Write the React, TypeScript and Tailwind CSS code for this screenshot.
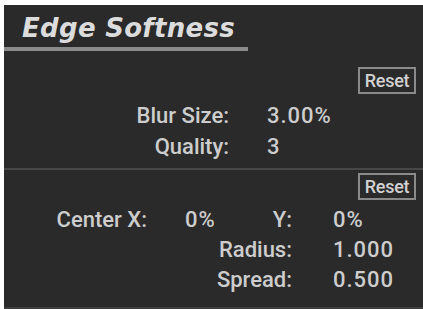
import React from "react";

const LABEL = "font-['Roboto',sans-serif] font-medium text-[22px] leading-[30px] text-[#cdcdcd]";

const ResetButton = () => (
  <div className="flex justify-end pr-[7px]">
    <button className="h-[27px] w-[58px] border-2 border-[#8a8a8a] text-[18px] leading-none tracking-[-0.3px] text-[#d2d2d2] font-['Roboto',sans-serif] font-medium">
      Reset
    </button>
  </div>
);

const App = () => {
  return (
    <div className="h-[309px] w-[423px] bg-white pl-[4px] pt-[5px]">
      <div className="flex h-full flex-col bg-[#2a2a2a]">
        {/* Title */}
        <div className="pt-[8px] pl-[18px]">
          <h1 className="font-['DejaVu_Sans',sans-serif] text-[26px] font-bold italic leading-[30px] tracking-[0.3px] text-[#dcdcdc]">
            Edge Softness
          </h1>
        </div>
        <div className="mt-[4px] h-[4px] w-[244px] bg-[#8a8a8a]" />

        {/* Blur */}
        <div className="mt-[16px]">
          <ResetButton />
        </div>
        <div className="mt-[6px] grid grid-cols-[225px_1fr] gap-x-[38px]">
          <span className={`${LABEL} text-right leading-[31px]`}>Blur Size:</span>
          <span className={`${LABEL} leading-[31px] tracking-[1px]`}>3.00%</span>
          <span className={`${LABEL} text-right leading-[31px]`}>Quality:</span>
          <span className={`${LABEL} leading-[31px]`}>3</span>
        </div>

        <div className="mt-[6px] h-[2px] bg-[#474747]" />

        {/* Shape */}
        <div className="mt-[3px]">
          <ResetButton />
        </div>
        <div className="mt-[5px] grid grid-cols-[288px_1fr] gap-x-[41px]">
          <div className="flex">
            <span className={`${LABEL} w-[143px] text-right`}>Center X:</span>
            <span className={`${LABEL} ml-[38px] tracking-[1px]`}>0%</span>
            <span className={`${LABEL} flex-1 text-right`}>Y:</span>
          </div>
          <span className={`${LABEL} tracking-[1px]`}>0%</span>
          <span className={`${LABEL} text-right`}>Radius:</span>
          <span className={`${LABEL} tracking-[1px]`}>1.000</span>
          <span className={`${LABEL} text-right`}>Spread:</span>
          <span className={`${LABEL} tracking-[1px]`}>0.500</span>
        </div>

        <div className="mt-auto h-[2px] bg-[#3e3e3e]" />
      </div>
    </div>
  );
};

export default App;
